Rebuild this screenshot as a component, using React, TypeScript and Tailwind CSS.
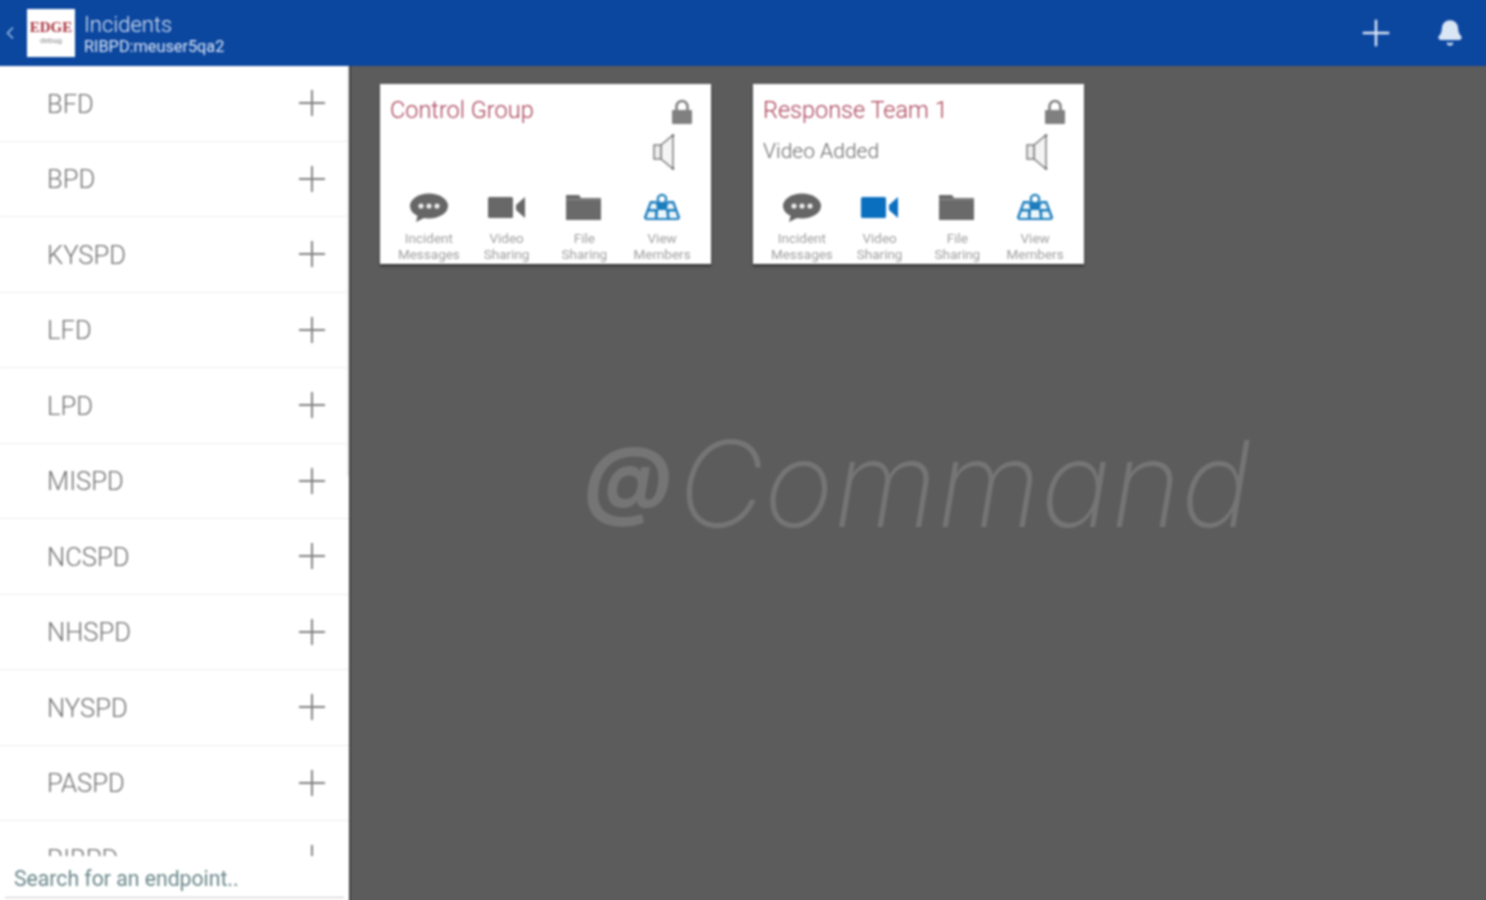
import React from 'react';
import { ChevronLeft, Plus, Bell } from 'lucide-react';

const endpoints = ['BFD', 'BPD', 'KYSPD', 'LFD', 'LPD', 'MISPD', 'NCSPD', 'NHSPD', 'NYSPD', 'PASPD', 'RIBPD'];

const LockIcon = () => (
  <svg width="22" height="26" viewBox="0 0 22 26" fill="none">
    <path d="M5.5 12 V7.5 a5.5 5.5 0 0 1 11 0 V12" stroke="#808080" strokeWidth="2.6" />
    <rect x="1" y="11" width="20" height="14" rx="1" fill="#808080" />
  </svg>
);

const ChatIcon = () => (
  <svg width="40" height="30" viewBox="0 0 40 30">
    <ellipse cx="20" cy="13" rx="19" ry="12.5" fill="#666" />
    <path d="M9 21 L7 29 L17 24 Z" fill="#666" />
    <circle cx="12" cy="13" r="2.6" fill="#eee" />
    <circle cx="20" cy="13" r="2.6" fill="#eee" />
    <circle cx="28" cy="13" r="2.6" fill="#eee" />
  </svg>
);

const VideoIcon = ({ active }: { active?: boolean }) => (
  <svg width="40" height="30" viewBox="0 0 40 30">
    <rect x="1" y="4" width="25" height="21" rx="1.5" fill={active ? '#0b6fc0' : '#686868'} />
    <path d="M38 4 V25 L29 17 V12 Z" fill={active ? '#0b6fc0' : '#686868'} />
  </svg>
);

const FolderIcon = () => (
  <svg width="40" height="30" viewBox="0 0 40 30">
    <path d="M2 2 H15 L17 5 H37 V27 H2 Z" fill="#6a6a6a" />
    <path d="M2 6.5 H37" stroke="#8d8d8d" strokeWidth="1" />
  </svg>
);

const MembersIcon = () => (
  <svg width="40" height="30" viewBox="0 0 40 30">
    <path d="M8 8 H14 L20 12 L26 8 H32 L38 24 Q38 27 35 27 H5 Q2 27 2 24 Z" fill="#1b7dbd" />
    <path d="M9.5 10.5 H14 L15 16 H7.5 Z M26 10.5 H30.5 L32.5 16 H25 Z M6.5 18.5 H13 L13 25 H4.5 Z M16 17 H24 L25 25 H15.5 Z M27 18.5 H33.5 L35.5 25 H27.5 Z" fill="#eef6fb" />
    <circle cx="20" cy="6" r="4.2" fill="#fff" stroke="#1b7dbd" strokeWidth="2.2" />
    <path d="M16.5 10 L20 16 L23.5 10 Z" fill="#1b7dbd" />
  </svg>
);

const SpeakerIcon = () => (
  <svg width="24" height="38" viewBox="0 0 24 38" fill="none">
    <path d="M21 2 L9 12 V26 L21 36 Z" fill="#f4f4f4" stroke="#777" strokeWidth="1.4" strokeLinejoin="round" />
    <rect x="2" y="12" width="7" height="14" fill="#eee" stroke="#777" strokeWidth="1.4" />
    <circle cx="21" cy="2.5" r="1.3" fill="#666" />
    <circle cx="21" cy="35.5" r="1.3" fill="#666" />
  </svg>
);

const CardAction = ({ icon, line1, line2 }: { icon: React.ReactNode; line1: string; line2: string }) => (
  <div className="flex flex-col items-center w-[78px]">
    <div className="h-[30px] flex items-center justify-center">{icon}</div>
    <div className="mt-[7px] text-[13.5px] leading-[16px] text-[#a0a0a0] text-center whitespace-nowrap">
      <div>{line1}</div>
      <div>{line2}</div>
    </div>
  </div>
);

const TeamCard = ({ title, status, videoActive }: { title: string; status?: string; videoActive?: boolean }) => (
  <div className="w-[331px] h-[180px] bg-white shadow-[0_2px_2px_rgba(0,0,0,0.5)] flex flex-col overflow-hidden">
    <div className="flex justify-between pl-[10px] pr-[18px] pt-[12px] h-[32px]">
      <span className="text-[23.5px] leading-[28px] font-light text-[#a83f55]">{title}</span>
      <div className="pt-[3px]"><LockIcon /></div>
    </div>
    <div className="flex justify-between items-center pl-[10px] pr-[35px] h-[50px] mt-[11px]">
      <span className="text-[21px] text-[#686868] font-light">{status}</span>
      <SpeakerIcon />
    </div>
    <div className="flex px-[10px] mt-[16px]">
      <CardAction icon={<ChatIcon />} line1="Incident" line2="Messages" />
      <CardAction icon={<VideoIcon active={videoActive} />} line1="Video" line2="Sharing" />
      <CardAction icon={<FolderIcon />} line1="File" line2="Sharing" />
      <CardAction icon={<MembersIcon />} line1="View" line2="Members" />
    </div>
  </div>
);

const App: React.FC = () => {
  return (
    <div className="h-[900px] w-[1486px] overflow-hidden">
      {/* 3px bleed on every side so the blur does not fade out at the window edge */}
      <div className="h-[906px] w-[1492px] -m-[3px] flex flex-col font-['Roboto',sans-serif] blur-[0.8px]">
        <header className="h-[69px] shrink-0 bg-[#0b469f] flex items-center pt-[3px] pl-[3px] pr-[3px] text-[#dbe6f5]">
          <ChevronLeft size={20} className="text-[#9fc0ea]" />
          <div className="ml-[7px] w-[48px] h-[48px] bg-white flex flex-col items-center justify-center">
            <span className="font-['Liberation_Serif',serif] font-bold text-[15px] leading-[15px] text-[#a8323e]">EDGE</span>
            <span className="text-[8px] leading-[12px] text-[#888]">debug</span>
          </div>
          <div className="ml-[9px] pt-[3px]">
            <div className="text-[22px] leading-[25px] font-light">Incidents</div>
            <div className="text-[16.3px] leading-[20px]">RIBPD:meuser5qa2</div>
          </div>
          <Plus size={42} strokeWidth={1.4} className="ml-auto text-[#dbe6f5]" />
          <Bell size={28} fill="#dbe6f5" className="ml-[39px] mr-[22px] text-[#dbe6f5]" />
        </header>

        <div className="flex-1 flex min-h-0">
          <aside className="w-[354px] shrink-0 bg-white border-r-2 border-[#3f3f3f] pl-[3px] pb-[3px] flex flex-col relative">
            <div className="flex-1 overflow-hidden">
              {endpoints.map(name => (
                <div key={name} className="h-[75.5px] border-b border-[#eeeeee] flex items-center justify-between pl-[47px] pr-[16px]">
                  <span className="text-[25.6px] font-light text-[#707070] pt-[1px]">{name}</span>
                  <Plus size={42} strokeWidth={1.1} className="text-[#808080]" />
                </div>
              ))}
            </div>
            <div className="absolute left-[350px] top-0 w-[2px] h-[410px] bg-[#ececec]" />
            <div className="h-[42px] bg-white mb-[2px] mx-[5px] border-b border-[#c9c9c9] flex items-center pl-[9px] pt-[5px]">
              <span className="text-[21.2px] text-[#6b878a]">Search for an endpoint..</span>
            </div>
          </aside>

          <main className="flex-1 bg-[#5c5c5c] relative pt-[18px] pl-[29px] flex gap-[42px] items-start">
            <div className="absolute inset-y-0 left-0 right-[4px] flex items-center justify-center">
              <span className="font-['Inter',sans-serif] text-[119px] leading-none italic font-extralight text-[#757575] whitespace-nowrap">
                <span className="font-bold text-[86px] relative top-[-18px] mr-[6px]">@</span>
                <span>Command</span>
              </span>
            </div>
            <div className="relative"><TeamCard title="Control Group" /></div>
            <div className="relative"><TeamCard title="Response Team 1" status="Video Added" videoActive /></div>
          </main>
        </div>
      </div>
    </div>
  );
};

export default App;
